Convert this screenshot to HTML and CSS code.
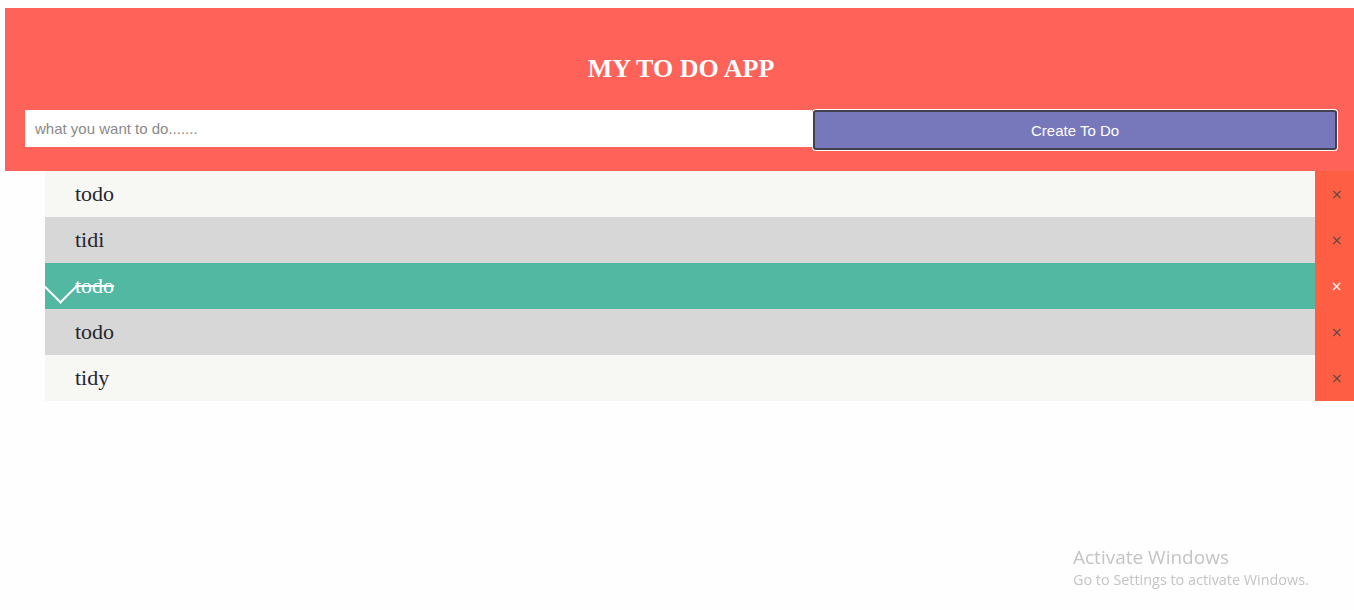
FILE: index.html
```html
<!DOCTYPE html>
<html>
<head>
<meta charset="utf-8">
<title>My To Do App</title>
<link rel="stylesheet" href="styles.css">
</head>
<body>
<div class="header">
  <h2 class="title">MY TO DO APP</h2>
  <div class="form">
    <input class="field" type="text" placeholder="what you want to do.......">
    <button class="add">Create To Do</button>
  </div>
</div>
<ul class="list">
  <li class="item odd"><span class="text">todo</span><span class="close">×</span></li>
  <li class="item even"><span class="text">tidi</span><span class="close">×</span></li>
  <li class="item checked"><span class="text">todo</span><span class="close">×</span></li>
  <li class="item even"><span class="text">todo</span><span class="close">×</span></li>
  <li class="item odd"><span class="text">tidy</span><span class="close">×</span></li>
</ul>
<div class="watermark">
  <div class="wm-title">Activate Windows</div>
  <div class="wm-sub">Go to Settings to activate Windows.</div>
</div>
</body>
</html>
```

FILE: styles.css
```css
html, body {
  margin: 0;
  padding: 0;
  background: #fefefe;
  overflow: hidden;
}

.header {
  margin: 8px 0 0 5px;
  background: #ff6259;
  padding: 46px 17px 21px 20px;
}

.title {
  margin: 0 0 26px 0;
  font-family: "Liberation Serif", serif;
  font-size: 26px;
  font-weight: bold;
  color: #ffffff;
  text-align: center;
  line-height: 30px;
}

.form {
  display: flex;
  align-items: flex-start;
}

.field {
  flex: 0 0 60%;
  min-width: 0;
  height: 37px;
  box-sizing: border-box;
  border: none;
  outline: none;
  margin: 0;
  padding: 0 10px;
  background: #ffffff;
  font-family: "Liberation Sans", Arial, sans-serif;
  font-size: 15px;
  color: #333;
}

.field::placeholder {
  color: #8a8a8a;
}

.add {
  flex: 1 1 auto;
  min-width: 0;
  height: 40px;
  box-sizing: border-box;
  margin: 0 0 0 1px;
  background: #7777bb;
  border: 2px solid #42424c;
  border-radius: 3px;
  box-shadow: 0 0 0 1px #ffffff;
  color: #ffffff;
  font-family: "Liberation Sans", Arial, sans-serif;
  font-size: 15px;
  padding: 0;
}

.list {
  list-style: none;
  margin: 0 0 0 45px;
  padding: 0;
}

.item {
  position: relative;
  display: flex;
  height: 46px;
}

.text {
  flex: 1;
  padding-left: 30px;
  line-height: 46px;
  font-family: "Liberation Serif", serif;
  font-size: 22px;
  color: #26262e;
}

.odd .text { background: #f7f8f4; }
.even .text { background: #d7d7d7; }
.checked .text {
  background: #52b8a2;
  color: #ffffff;
  text-decoration: line-through;
}

.checked::before {
  content: "";
  position: absolute;
  left: 4px;
  top: 13px;
  width: 21px;
  height: 21px;
  border-style: solid;
  border-color: #ffffff;
  border-width: 0 2px 2px 0;
  transform: rotate(45deg);
}

.close {
  width: 39px;
  box-sizing: border-box;
  padding-left: 4px;
  background: #fd5e44;
  display: flex;
  align-items: center;
  justify-content: center;
  font-family: "DejaVu Sans", sans-serif;
  font-size: 14px;
  color: #5a4a48;
}

.checked .close {
  color: #ffffff;
}

.watermark {
  position: fixed;
  left: 1073px;
  top: 544px;
  font-family: "Open Sans", sans-serif;
  color: #c4c4c4;
}

.wm-title {
  font-size: 19px;
  line-height: 26px;
}

.wm-sub {
  font-size: 14.4px;
  line-height: 20px;
}
```
